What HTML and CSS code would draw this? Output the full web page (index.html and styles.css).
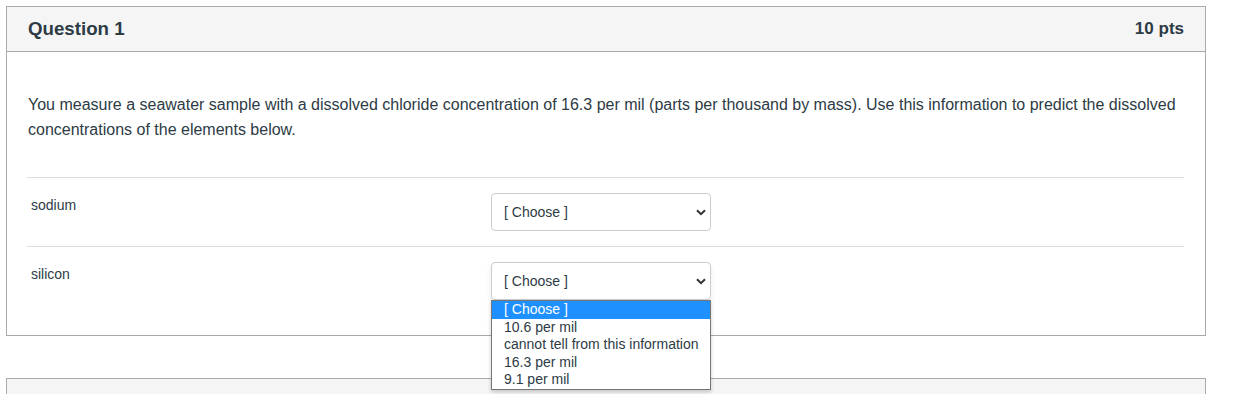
FILE: index.html
```html
<!DOCTYPE html>
<html lang="en">
<head>
    <meta charset="UTF-8">
    <title>Quiz</title>
    <link rel="stylesheet" href="styles.css">
</head>
<body>
    <div class="quiz">
        <div class="question">
            <div class="question-header">
                <h2>Question 1</h2>
                <span class="points">10 pts</span>
            </div>
            <div class="question-body">
                <p class="question-text">You measure a seawater sample with a dissolved chloride concentration of 16.3 per mil (parts per thousand by mass). Use this information to predict the dissolved concentrations of the elements below.</p>

                <div class="answer-row">
                    <div class="answer-label">sodium</div>
                    <div class="select">
                        <span>[ Choose ]</span>
                        <svg class="chevron" width="10" height="7" viewBox="0 0 10 7"><path d="M1 1.2 L5 5.2 L9 1.2" fill="none" stroke="#333" stroke-width="2"/></svg>
                    </div>
                </div>

                <div class="answer-row">
                    <div class="answer-label">silicon</div>
                    <div class="select open">
                        <span>[ Choose ]</span>
                        <svg class="chevron" width="10" height="7" viewBox="0 0 10 7"><path d="M1 1.2 L5 5.2 L9 1.2" fill="none" stroke="#333" stroke-width="2"/></svg>
                        <ul class="options">
                            <li class="selected">[ Choose ]</li>
                            <li>10.6 per mil</li>
                            <li>cannot tell from this information</li>
                            <li>16.3 per mil</li>
                            <li>9.1 per mil</li>
                        </ul>
                    </div>
                </div>
            </div>
        </div>

        <div class="question">
            <div class="question-header">
                <h2>Question 2</h2>
            </div>
        </div>
    </div>
</body>
</html>
```

FILE: styles.css
```css
* { box-sizing: border-box; }

body {
    margin: 0;
    background: #fff;
    color: #2d3b45;
    font-family: "Liberation Sans", Arial, sans-serif;
}

.quiz {
    padding: 6px;
    display: flex;
    flex-direction: column;
    gap: 42px;
}

/* question card */
.question {
    width: 1200px;
    border: 1px solid #aaa;
    background: #fff;
}

.question-header {
    background: #f5f5f5;
    border-bottom: 1px solid #aaa;
    height: 45px;
    padding: 0 21px;
    display: flex;
    align-items: center;
    justify-content: space-between;
}

.question-header h2 {
    margin: 0;
    font-size: 18.7px;
    font-weight: bold;
    color: #2d3b45;
}

.points {
    font-size: 17px;
    font-weight: bold;
    color: #2d3b45;
}

.question-body {
    padding: 40px 21px 20px 21px;
}

.question-text {
    margin: 0 0 35px 0;
    font-size: 16px;
    line-height: 25px;
    color: #2d3b45;
}

/* answer rows */
.answer-row {
    border-top: 1px solid #ddd;
    display: grid;
    grid-template-columns: 460px 220px;
    padding: 15px 0 15px 4px;
    margin-left: -1px;
}

.answer-label {
    font-size: 14px;
    line-height: 17px;
    padding-top: 4px;
}

.select {
    position: relative;
    height: 38px;
    border: 1px solid #ccc;
    border-radius: 4px;
    background: #fff;
    padding: 0 12px;
    display: flex;
    align-items: center;
    justify-content: space-between;
    font-size: 14px;
}

.select.open {
    box-shadow: 0 3px 6px rgba(0, 0, 0, 0.08);
}

.chevron { margin-right: -8px; }

/* open dropdown list */
.options {
    position: absolute;
    top: 37px;
    left: -1px;
    width: 220px;
    margin: 0;
    padding: 0;
    list-style: none;
    background: #fff;
    border: 1px solid #767676;
    box-shadow: 0 2px 4px rgba(0, 0, 0, 0.2);
    z-index: 5;
    font-size: 14px;
}

.options li {
    height: 17.6px;
    line-height: 17.6px;
    padding-left: 12px;
    color: #2d3b45;
    white-space: nowrap;
}

.options li.selected {
    background: #1e90ff;
    color: #fff;
}
```
